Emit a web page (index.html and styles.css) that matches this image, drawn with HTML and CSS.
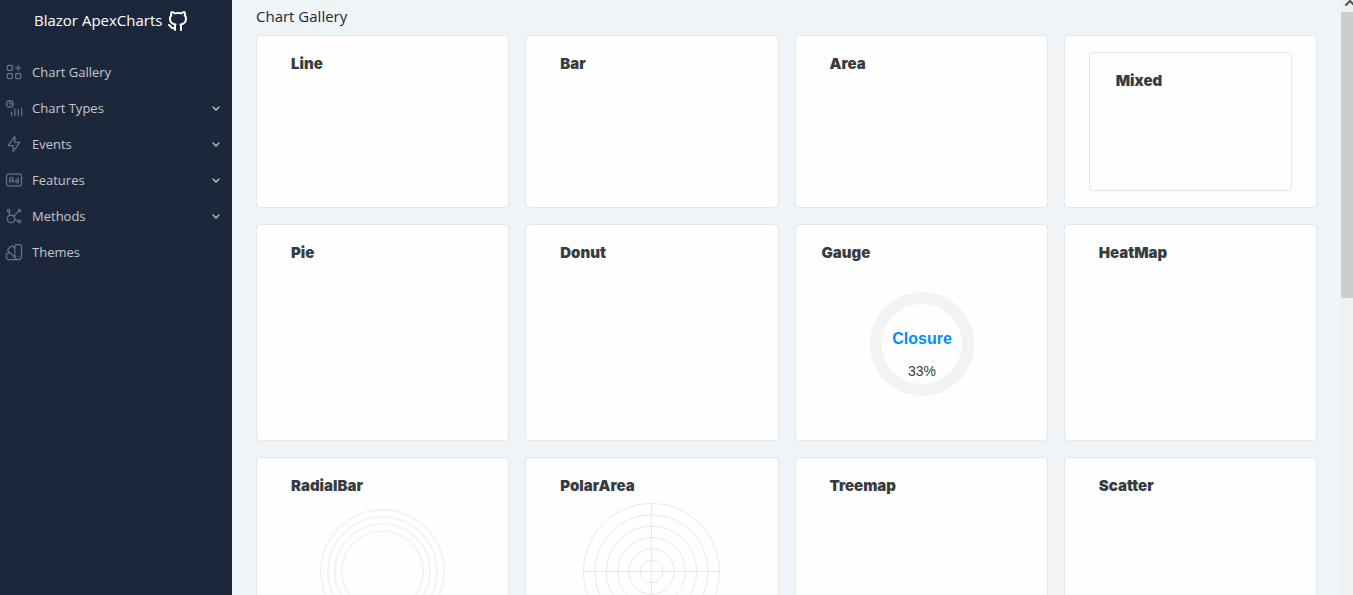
FILE: index.html
```html
<!DOCTYPE html>
<html lang="en">
<head>
  <meta charset="UTF-8">
  <meta name="viewport" content="width=device-width, initial-scale=1">
  <title>Blazor ApexCharts - Chart Gallery</title>
  <link rel="stylesheet" href="styles.css">
</head>
<body>
  <aside class="sidebar">
    <a class="brand" href="#">
      <span>Blazor ApexCharts</span>
      <svg class="brand-icon" viewBox="0 0 24 24"><path d="M9 19c-4.3 1.4 -4.3 -2.5 -6 -3m12 5v-3.5c0 -1 .1 -1.4 -.5 -2c2.8 -.3 5.5 -1.4 5.5 -6a4.6 4.6 0 0 0 -1.3 -3.2a4.2 4.2 0 0 0 -.1 -3.2s-1.1 -.3 -3.5 1.3a12.3 12.3 0 0 0 -6.2 0c-2.4 -1.6 -3.5 -1.3 -3.5 -1.3a4.2 4.2 0 0 0 -.1 3.2a4.6 4.6 0 0 0 -1.3 3.2c0 4.6 2.7 5.7 5.5 6c-.6 .6 -.6 1.2 -.5 2v3.5"/></svg>
    </a>

    <nav class="menu">
      <a class="menu-item" href="#">
        <svg class="menu-icon" viewBox="0 0 24 24"><rect x="4" y="4" width="6" height="6" rx="1"/><rect x="4" y="14" width="6" height="6" rx="1"/><rect x="14" y="14" width="6" height="6" rx="1"/><path d="M14 7h6M17 4v6"/></svg>
        <span>Chart Gallery</span>
      </a>
      <button class="menu-item" type="button">
        <svg class="menu-icon" viewBox="0 0 24 24"><circle cx="7" cy="7" r="4"/><path d="M7 3v4h4M9 17v4M17 14v7M13 13v8M21 12v9"/></svg>
        <span>Chart Types</span>
        <svg class="chevron" viewBox="0 0 10 10"><path d="M2 4l3 3l3 -3"/></svg>
      </button>
      <button class="menu-item" type="button">
        <svg class="menu-icon" viewBox="0 0 24 24"><path d="M13 3v7h6l-8 11v-7h-6l8 -11"/></svg>
        <span>Events</span>
        <svg class="chevron" viewBox="0 0 10 10"><path d="M2 4l3 3l3 -3"/></svg>
      </button>
      <button class="menu-item" type="button">
        <svg class="menu-icon" viewBox="0 0 24 24"><rect x="3" y="5" width="18" height="14" rx="2"/><path d="M7 15v-4a2 2 0 0 1 4 0v4M7 13h4M17 9v6h-1.5a1.5 1.5 0 1 1 1.5 -1.5"/></svg>
        <span>Features</span>
        <svg class="chevron" viewBox="0 0 10 10"><path d="M2 4l3 3l3 -3"/></svg>
      </button>
      <button class="menu-item" type="button">
        <svg class="menu-icon" viewBox="0 0 24 24"><path d="M5.9 6.9l1.3 4.3M12.8 16.8l4.3 1.3M11.7 12.3l5.8 -5.8"/><circle cx="5.5" cy="5.5" r="1.5"/><circle cx="18.5" cy="5.5" r="1.5"/><circle cx="18.5" cy="18.5" r="1.5"/><circle cx="8.5" cy="15.5" r="4.5"/></svg>
        <span>Methods</span>
        <svg class="chevron" viewBox="0 0 10 10"><path d="M2 4l3 3l3 -3"/></svg>
      </button>
      <a class="menu-item" href="#">
        <svg class="menu-icon" viewBox="0 0 24 24"><path d="M19 3h-4a2 2 0 0 0 -2 2v12a4 4 0 0 0 8 0v-12a2 2 0 0 0 -2 -2M13 7.35l-2 -2a2 2 0 0 0 -2.828 0l-2.828 2.828a2 2 0 0 0 0 2.828l9 9M7.3 13h-2.3a2 2 0 0 0 -2 2v4a2 2 0 0 0 2 2h12M17 17v.01"/></svg>
        <span>Themes</span>
      </a>
    </nav>
  </aside>

  <main class="content">
    <h1 class="page-title">Chart Gallery</h1>

    <div class="gallery">
      <!-- Row 1 -->
      <section class="card">
        <h2 class="card-title">Line</h2>
        <div class="plot plot-small"></div>
      </section>
      <section class="card">
        <h2 class="card-title">Bar</h2>
      </section>
      <section class="card">
        <h2 class="card-title">Area</h2>
      </section>
      <section class="card">
        <div class="inner-card">
          <h2 class="card-title title-near">Mixed</h2>
        </div>
      </section>

      <!-- Row 2 -->
      <section class="card">
        <h2 class="card-title">Pie</h2>
      </section>
      <section class="card">
        <h2 class="card-title">Donut</h2>
      </section>
      <section class="card">
        <h2 class="card-title title-near">Gauge</h2>
        <div class="plot plot-large">
          <svg class="gauge" viewBox="0 0 106 106">
            <circle class="gauge-track" cx="54" cy="52" r="46"/>
            <text class="gauge-name" x="54" y="52">Closure</text>
            <text class="gauge-value" x="54" y="84">33%</text>
          </svg>
        </div>
      </section>
      <section class="card">
        <h2 class="card-title">HeatMap</h2>
      </section>

      <!-- Row 3 -->
      <section class="card">
        <h2 class="card-title">RadialBar</h2>
        <div class="plot">
          <svg class="radial" viewBox="0 0 137 137">
            <circle cx="68.5" cy="68.5" r="61.5"/>
            <circle cx="68.5" cy="68.5" r="54.5"/>
            <circle cx="68.5" cy="68.5" r="47.5"/>
            <circle cx="68.5" cy="68.5" r="40.5"/>
          </svg>
        </div>
      </section>
      <section class="card">
        <h2 class="card-title">PolarArea</h2>
        <div class="plot">
          <svg class="polar" viewBox="0 0 137 137">
            <circle cx="68.5" cy="68.5" r="68"/>
            <circle cx="68.5" cy="68.5" r="56.7"/>
            <circle cx="68.5" cy="68.5" r="45.3"/>
            <circle cx="68.5" cy="68.5" r="34"/>
            <circle cx="68.5" cy="68.5" r="22.7"/>
            <circle cx="68.5" cy="68.5" r="11.3"/>
            <path d="M68.5 0v137M0 68.5h137"/>
          </svg>
        </div>
      </section>
      <section class="card">
        <h2 class="card-title">Treemap</h2>
      </section>
      <section class="card">
        <h2 class="card-title">Scatter</h2>
      </section>
    </div>
  </main>

  <div class="scrollbar">
    <svg class="scroll-up" viewBox="0 0 12 12"><path d="M5 5l4 -4l4 4"/></svg>
    <div class="scroll-thumb"></div>
  </div>
</body>
</html>
```
FILE: styles.css
```css
* {
  box-sizing: border-box;
}

body {
  margin: 0;
  height: 100vh;
  display: flex;
  overflow: hidden;
  font-family: "Open Sans", "Noto Sans", sans-serif;
  color: #1d273b;
  background-color: #eff4f8;
}

/* Sidebar */
.sidebar {
  flex: 0 0 232px;
  background-color: #1d273b;
}

.brand {
  display: flex;
  gap: 4px;
  padding: 9px 0 0 34px;
  color: #ffffff;
  font-size: 15px;
  line-height: 22px;
  text-decoration: none;
  white-space: nowrap;
}

.brand-icon {
  width: 24px;
  height: 24px;
}

.brand-icon,
.menu-icon,
.chevron,
.scroll-up {
  flex: none;
  fill: none;
  stroke: currentColor;
  stroke-width: 2;
  stroke-linecap: round;
  stroke-linejoin: round;
}

.menu {
  margin-top: 21px;
}

.menu-item {
  display: flex;
  align-items: center;
  gap: 8px;
  width: 100%;
  height: 36px;
  padding: 0 11px 0 4px;
  border: none;
  background: none;
  color: #c4c8ce;
  font-family: inherit;
  font-size: 13px;
  text-align: left;
  text-decoration: none;
  cursor: pointer;
}

.menu-icon {
  width: 20px;
  height: 20px;
  color: #677389;
  stroke-width: 1.5;
}

.chevron {
  width: 10px;
  height: 10px;
  margin-left: auto;
  stroke-width: 1.3;
}

/* Gallery */
.content {
  flex: 1;
  min-width: 0;
  padding: 4px 24px 0;
  overflow: hidden;
}

.page-title {
  margin: 0 0 7px;
  font-size: 15px;
  font-weight: 400;
  line-height: 24px;
}

.gallery {
  display: grid;
  grid-template-columns: repeat(4, minmax(0, 1fr));
  gap: 16px;
}

.card {
  display: flex;
  flex-direction: column;
  padding: 16px 24px;
  border: 1px solid #e4e6e8;
  border-radius: 4px;
  background-color: #fefefe;
}

.inner-card {
  flex: 1;
  padding: 16px 24px;
  border: 1px solid #e4e6e8;
  border-radius: 4px;
}

.card-title {
  margin: 0;
  padding-left: 10px;
  color: #373d3f;
  font-family: Inter, "Liberation Sans", sans-serif;
  font-size: 15px;
  font-weight: 900;
  line-height: 24px;
}

.title-near {
  padding-left: 2px;
}

/* Charts */
.plot {
  display: flex;
  align-items: center;
  justify-content: center;
  height: 147px;
}

.plot-small {
  height: 115px;
}

.plot-large {
  height: 159px;
}

.gauge {
  width: 106px;
  height: 106px;
}

.gauge-track {
  fill: none;
  stroke: #f3f3f3;
  stroke-width: 12;
}

.gauge-name,
.gauge-value {
  font-family: "Liberation Sans", Arial, sans-serif;
  text-anchor: middle;
}

.gauge-name {
  fill: #008ffb;
  font-size: 16px;
  font-weight: 700;
}

.gauge-value {
  fill: #373d3f;
  font-size: 14px;
}

.radial,
.polar {
  width: 137px;
  height: 137px;
  fill: none;
}

.radial {
  stroke: #f3f3f3;
  stroke-width: 2;
}

.polar {
  stroke: #e8e8e8;
  stroke-width: 1;
}

/* Scrollbar */
.scrollbar {
  flex: 0 0 12px;
  background-color: #f0f0f0;
}

.scroll-up {
  display: block;
  width: 12px;
  height: 12px;
  color: #505050;
}

.scroll-thumb {
  height: 48%;
  background-color: #cdcdcd;
}
```
